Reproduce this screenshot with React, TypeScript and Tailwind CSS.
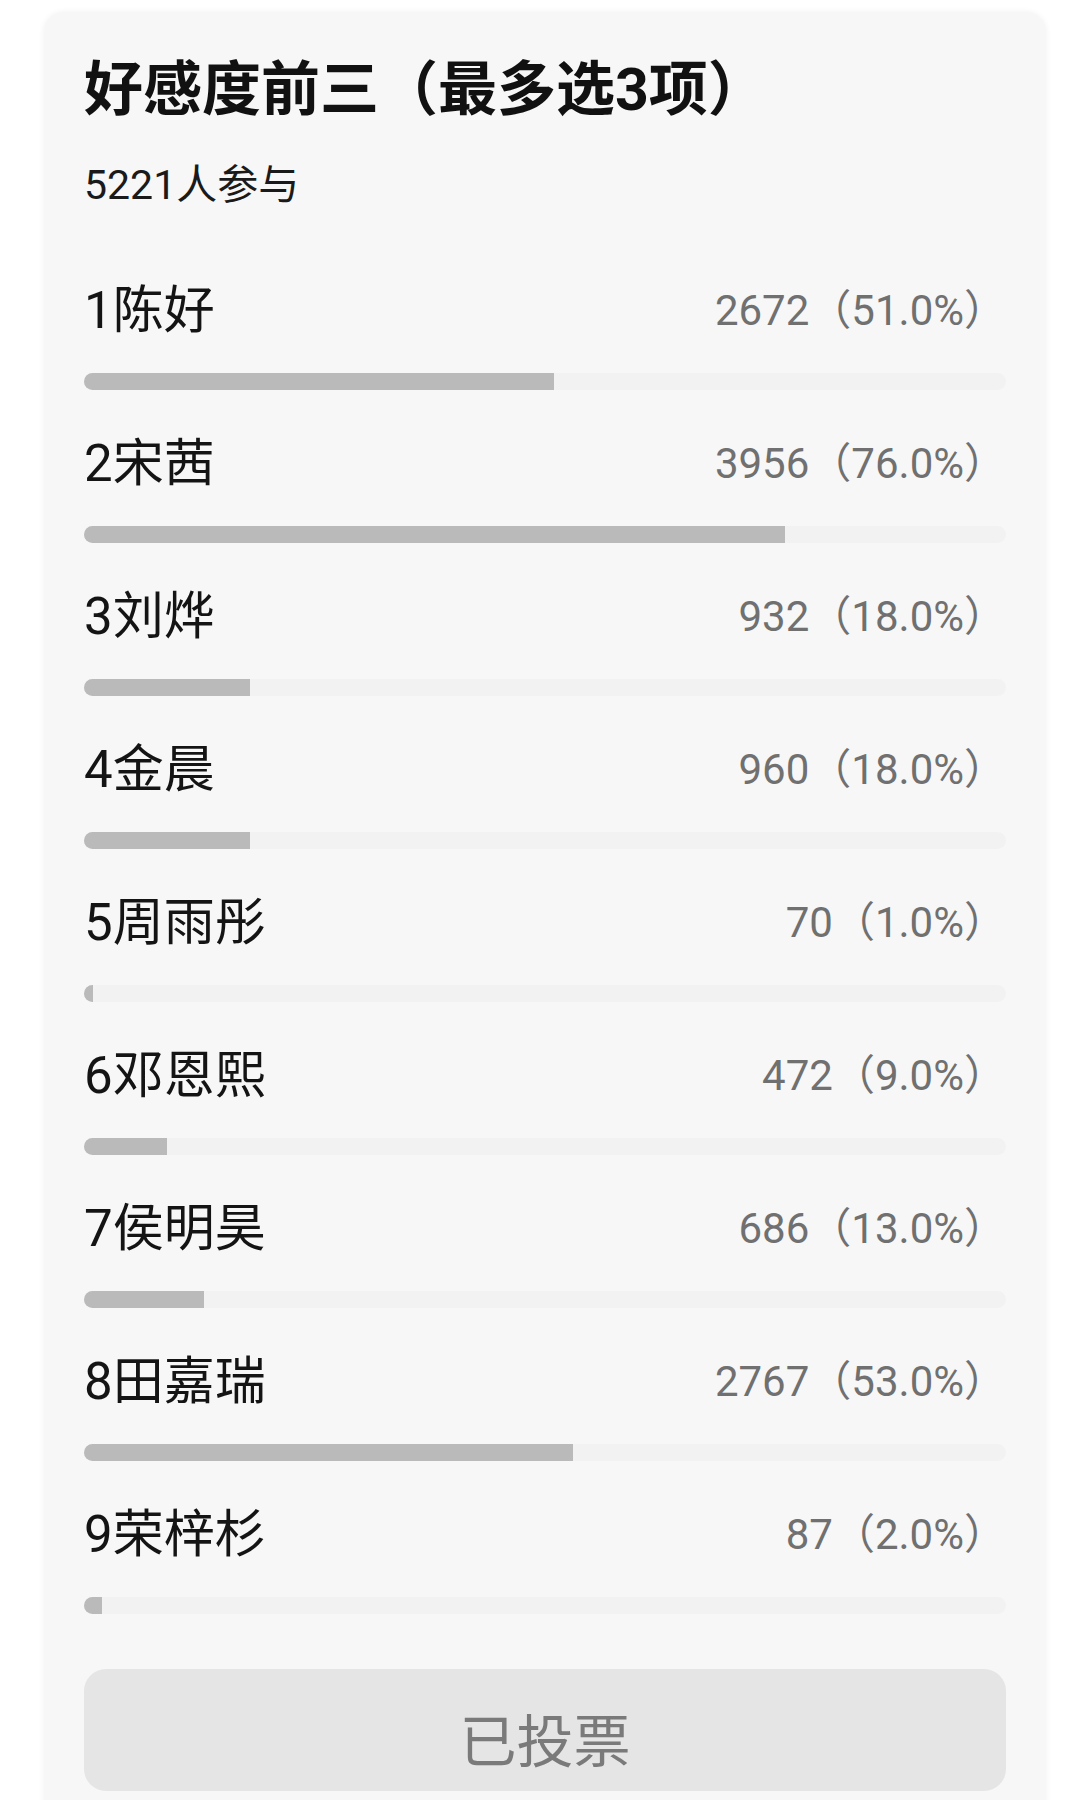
import React from 'react';

type Option = {
  name: string;
  votes: number;
  pct: number;
};

const options: Option[] = [
  { name: '1陈好', votes: 2672, pct: 51 },
  { name: '2宋茜', votes: 3956, pct: 76 },
  { name: '3刘烨', votes: 932, pct: 18 },
  { name: '4金晨', votes: 960, pct: 18 },
  { name: '5周雨彤', votes: 70, pct: 1 },
  { name: '6邓恩熙', votes: 472, pct: 9 },
  { name: '7侯明昊', votes: 686, pct: 13 },
  { name: '8田嘉瑞', votes: 2767, pct: 53 },
  { name: '9荣梓杉', votes: 87, pct: 2 },
];

const font = "font-['Roboto','Noto_Sans_CJK_SC',sans-serif]";

function OptionRow({ option }: { option: Option }) {
  return (
    <div>
      <div className="flex h-[60px] items-center justify-between">
        <span className="text-[51px] leading-[60px] text-[#141414]">{option.name}</span>
        <span className="text-[42px] leading-[60px] text-[#707070]">
          {option.votes}（{option.pct.toFixed(1)}%）
        </span>
      </div>
      <div className="mt-[32px] h-[17px] w-full overflow-hidden rounded-full bg-[#f2f2f2]">
        {/* fill is square on the right, only the track is rounded */}
        <div className="h-full bg-[#bababa]" style={{ width: `${option.pct}%` }} />
      </div>
    </div>
  );
}

export default function App() {
  return (
    <div className={`min-h-[1800px] bg-white pt-[12px] pl-[44px] ${font}`}>
      <div className="w-[1002px] rounded-[20px] bg-[#f7f7f7] px-[40px] pt-[40px] pb-[40px] shadow-[0_0_6px_rgba(0,0,0,0.06)]">
        {/* header */}
        <h1 className="text-[59px] font-bold leading-[76px] text-[#111]">
          好感度前三（最多选3项）
        </h1>
        <div className="mt-[31px] text-[41px] leading-[52px] text-[#1a1a1a]">5221人参与</div>

        {/* options */}
        <div className="mt-[70px] flex flex-col gap-[44px]">
          {options.map((o) => (
            <OptionRow key={o.name} option={o} />
          ))}
        </div>

        {/* voted button */}
        <button
          type="button"
          disabled
          className="mt-[55px] flex h-[122px] w-full items-center justify-center rounded-[22px] bg-[#e5e5e5] pt-[26px] text-[57px] leading-[80px] text-[#7a7a7a]"
        >
          已投票
        </button>
      </div>
    </div>
  );
}
